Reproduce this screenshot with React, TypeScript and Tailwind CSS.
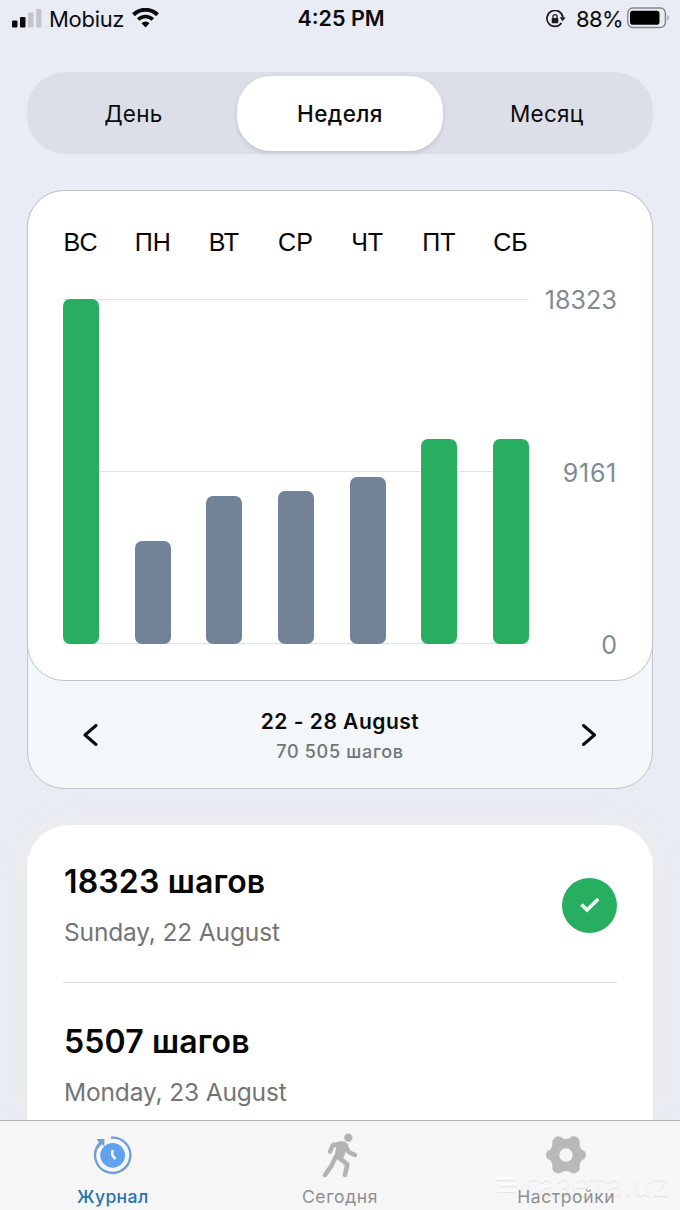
import { useState } from "react";

interface DayBar {
  label: string;
  height: number;
  done: boolean;
}

interface EntryProps {
  steps: string;
  date: string;
  done?: boolean;
}

const days: DayBar[] = [
  { label: "ВС", height: 345, done: true },
  { label: "ПН", height: 103, done: false },
  { label: "ВТ", height: 148, done: false },
  { label: "СР", height: 153, done: false },
  { label: "ЧТ", height: 167, done: false },
  { label: "ПТ", height: 205, done: true },
  { label: "СБ", height: 205, done: true },
];

const periods = ["День", "Неделя", "Месяц"];

const StatusBar = () => (
  <header className="grid h-[37px] shrink-0 grid-cols-3 items-center pl-3 pr-[10px] text-[22px] leading-none">
    <div className="flex items-center">
      <svg width="30" height="20" viewBox="0 0 30 20" className="mt-px">
        <rect x="0" y="11.500" width="5.500" height="7" rx="1.300" fill="#0b0b0d" />
        <rect x="8" y="8" width="5.500" height="10.500" rx="1.300" fill="#0b0b0d" />
        <rect x="16" y="3.500" width="5.500" height="15" rx="1.300" fill="#c3c5c9" />
        <rect x="24.200" y="0" width="5.300" height="18.500" rx="1.300" fill="#c3c5c9" />
      </svg>
      <span className="ml-[7px] tracking-[-0.3px]">Mobiuz</span>
      <svg width="27" height="20" viewBox="0 0 27 20" className="ml-[8px] mt-[-1px]" fill="none" stroke="#0b0b0d">
        <path d="M1.500 6.700a17.200 17.200 0 0 1 24 0" strokeWidth="4" />
        <path d="M6.200 11.600a10.300 10.300 0 0 1 14.600 0" strokeWidth="3.600" />
        <path d="M9.500 15.200a5.800 5.800 0 0 1 8 0l-4 4.200z" fill="#0b0b0d" stroke="none" />
      </svg>
    </div>
    <div className="pt-px text-center text-[21.500px] font-semibold">4:25 PM</div>
    <div className="flex items-center justify-end">
      <svg width="20" height="18" viewBox="0 0 20 18" fill="none" stroke="#1b1b1e">
        <path d="M15.500 13A8 8 0 1 1 16.900 7.500" strokeWidth="1.700" />
        <path d="M13.600 7.300h6l-3 3.900z" fill="#1b1b1e" stroke="none" />
        <rect x="5.700" y="7.900" width="6.600" height="5.300" rx="0.800" fill="#1b1b1e" stroke="none" />
        <path d="M7 8.200V6.600a2 2 0 0 1 4 0v1.600" strokeWidth="1.300" />
      </svg>
      <span className="ml-[10px] tracking-[-0.600px]">88%</span>
      <svg width="43" height="22" viewBox="0 0 43 22" className="ml-[4px] mt-[-2px]">
        <rect x="0.800" y="1" width="37.600" height="19.500" rx="5" fill="none" stroke="#85878a" strokeWidth="1.400" />
        <rect x="3" y="3.700" width="29.500" height="14" rx="2.800" fill="#000" />
        <path d="M40.500 7.500q2.200 3.200 0 6.500z" fill="#85878a" />
      </svg>
    </div>
  </header>
);

const Entry: React.FC<EntryProps> = ({ steps, date, done }) => (
  <div className="flex h-[157px] items-center justify-between pt-[3px]">
    <div className="pl-px">
      <h2 className="text-[32px] font-semibold leading-[40px] tracking-[0.150px] text-[#080808]">{steps}</h2>
      <p className="mt-[14px] text-[24.500px] leading-[32px] tracking-[-0.150px] text-[#747474]">{date}</p>
    </div>
    {done && (
      <div className="grid h-[55px] w-[55px] place-content-center rounded-full bg-[#27ae60]">
        <svg width="20" height="16" viewBox="0 0 20 16" fill="none" stroke="#eefff3" strokeWidth="3.600">
          <path d="M1.500 7.500l5.500 5.500L18.300 2" />
        </svg>
      </div>
    )}
  </div>
);

const JournalIcon = () => (
  <svg width="40" height="42" viewBox="279 103 120 126" fill="none">
    <path d="M333 114A53 53 0 1 1 295 136" stroke="#6c9fd6" strokeWidth="7" />
    <path d="M290 118h23v21l-8-5l-10 11l-6-6l8-11z" fill="#6c9fd6" />
    <circle cx="338" cy="167" r="37" fill="#60a3ec" />
    <path d="M337 151v15l9 13" stroke="#eef8ff" strokeWidth="8" />
  </svg>
);

const WalkIcon = () => (
  <svg width="40" height="47" viewBox="210 95 120 141" fill="none" stroke="#b3b3b3" strokeLinecap="round" strokeLinejoin="round">
    <circle cx="295" cy="112" r="12.500" fill="#b3b3b3" stroke="none" />
    <path d="M240 154l9-20l23-3" strokeWidth="13" />
    <path d="M288 139l9 17l18 8" strokeWidth="13" />
    <path d="M264 129q18-6 27 6l-14 34l-20 5z" fill="#b3b3b3" strokeWidth="8" />
    <path d="M257 170l-13 27l-19 27" strokeWidth="14" />
    <path d="M267 172l25 20l-7 32" strokeWidth="14" />
  </svg>
);

const GearIcon = () => (
  <svg width="42" height="40" viewBox="257 105 126 120">
    <path
      fillRule="evenodd"
      fill="#b9b9b9"
      d="M288 112Q296 106 304 110Q309 117 320 117Q331 117 336 110Q344 106 354 112Q362 118 361 128Q359 140 366 148Q370 151 375 153Q380 158 380 165Q380 172 375 177Q370 179 366 182Q359 190 361 202Q362 212 354 217Q344 222 336 219Q331 213 320 213Q309 213 304 219Q296 222 286 217Q278 212 279 202Q281 190 274 182Q270 179 265 177Q260 172 260 165Q260 158 265 153Q270 151 274 148Q281 140 279 128Q279 118 288 112ZM320 145a20 20 0 1 0 0 40a20 20 0 1 0 0-40Z"
    />
  </svg>
);

const App = () => {
  const [period, setPeriod] = useState<string>("Неделя");

  return (
    <div className="relative flex h-[1210px] w-[680px] flex-col overflow-hidden bg-[#e9ecf4] font-['Inter','Liberation_Sans',sans-serif] text-[#0b0b0d]">
      <StatusBar />

      <div className="mx-[27px] mt-[35px] grid h-[82px] shrink-0 grid-cols-3 rounded-[38px] bg-[#dcdfe7] px-[3px] py-[3.500px]">
        {periods.map((item) => (
          <button
            key={item}
            onClick={() => setPeriod(item)}
            className={`rounded-[34px] pt-px text-[22.500px] ${
              period === item ? "bg-white font-medium tracking-[0.400px] shadow-[0_2px_5px_rgba(0,0,0,0.12)]" : "tracking-[0.200px]"
            }`}
          >
            {item}
          </button>
        ))}
      </div>

      <section className="mx-[27px] mt-[36px] h-[599px] shrink-0 rounded-[37px] border border-[#c2c5c7] bg-[#f3f7f9]">
        <div className="-mx-px -mt-px h-[491px] rounded-[37px] border border-[#c2c5c7] bg-white px-[35px] pt-[36px]">
          <div className="flex w-[465px] justify-between font-['Liberation_Sans',sans-serif] text-[25px] leading-[31px] text-[#050505]">
            {days.map((day) => (
              <span key={day.label} className="w-[35px] whitespace-nowrap text-center">
                {day.label}
              </span>
            ))}
          </div>
          <div className="mt-[41px] flex h-[345px]">
            <div className="grid w-[466px]">
              <div className="col-start-1 row-start-1 flex flex-col justify-between">
                <div className="h-px bg-[#e2e3e5]" />
                <div className="h-px bg-[#e2e3e5]" />
                <div className="h-px bg-[#e2e3e5]" />
              </div>
              <div className="col-start-1 row-start-1 flex items-end justify-between">
                {days.map((day) => (
                  <div
                    key={day.label}
                    className={`w-[36px] rounded-[7px] ${day.done ? "bg-[#27ae60]" : "bg-[#728398]"}`}
                    style={{ height: day.height }}
                  />
                ))}
              </div>
            </div>
            <div className="-mt-[14px] -mb-[16px] flex flex-1 flex-col justify-between text-right text-[25px] leading-[30px] tracking-[0.100px] text-[#7f8b95]">
              <span>18323</span>
              <span className="tracking-[0.700px]">9161</span>
              <span>0</span>
            </div>
          </div>
        </div>

        <div className="flex h-[108px] items-center justify-between px-[53px]">
          <button className="p-0.5">
            <svg width="16" height="23" viewBox="0 0 16 23" fill="none" stroke="#0b0b0d" strokeWidth="3" strokeLinecap="round" strokeLinejoin="round">
              <path d="M13 1.500L2 11l11 9.500" />
            </svg>
          </button>
          <div className="pt-[2px] text-center">
            <div className="text-[21px] font-semibold leading-[28px] tracking-[0.500px]">22 - 28 August</div>
            <div className="mt-[3px] text-[18px] font-medium leading-[26px] tracking-[0.700px] text-[#737678]">70 505 шагов</div>
          </div>
          <button className="p-0.5">
            <svg width="16" height="23" viewBox="0 0 16 23" fill="none" stroke="#0b0b0d" strokeWidth="3" strokeLinecap="round" strokeLinejoin="round">
              <path d="M2.500 1.500l11 9.500l-11 9.500" />
            </svg>
          </button>
        </div>
      </section>

      <section className="mx-[27px] mt-[36px] h-[295px] shrink-0 overflow-hidden rounded-t-[42px] bg-white px-[36px] shadow-[0_0_24px_rgba(240,238,225,0.7)]">
        <Entry steps="18323 шагов" date="Sunday, 22 August" done />
        <div className="h-px bg-[#dddfe0]" />
        <div className="pt-[2px]">
          <Entry steps="5507 шагов" date="Monday, 23 August" />
        </div>
      </section>

      {/* the watermark sits on the bar, under the tab labels */}
      <nav className="relative z-10 grid h-[90px] shrink-0 grid-cols-3 border-t border-[#b0b2b3] bg-[#f6f6f7] text-[17.500px] tracking-[0.600px] text-[#8f8f90]">
        <div className="absolute bottom-[7px] right-[11px] flex items-center gap-[7px] text-white/70 [text-shadow:0_1px_1px_rgba(0,0,0,0.09)]">
          <svg width="22" height="20" viewBox="0 0 22 20" fill="none">
            <path d="M0 5h20M5 11h16M2 17h18" stroke="#e4e4e4" strokeWidth="2" />
            <path d="M0 3.500h20M5 9.500h16M2 15.500h18" stroke="#ffffff" strokeWidth="2.500" />
          </svg>
          <span className="text-[32px] leading-[36px] tracking-normal">газета.uz</span>
        </div>
        <a className="relative flex flex-col items-center pr-px pt-[13px] font-medium text-[#2673b0]">
          <JournalIcon />
          <span className="mt-[9px] leading-[24px] tracking-[0.400px]">Журнал</span>
        </a>
        <a className="relative flex flex-col items-center pt-[11px]">
          <WalkIcon />
          <span className="mt-[6px] leading-[24px]">Сегодня</span>
        </a>
        <a className="relative flex flex-col items-center pr-px pt-[14px]">
          <GearIcon />
          <span className="mt-[10px] leading-[24px]">Настройки</span>
        </a>
      </nav>
    </div>
  );
};

export default App;
